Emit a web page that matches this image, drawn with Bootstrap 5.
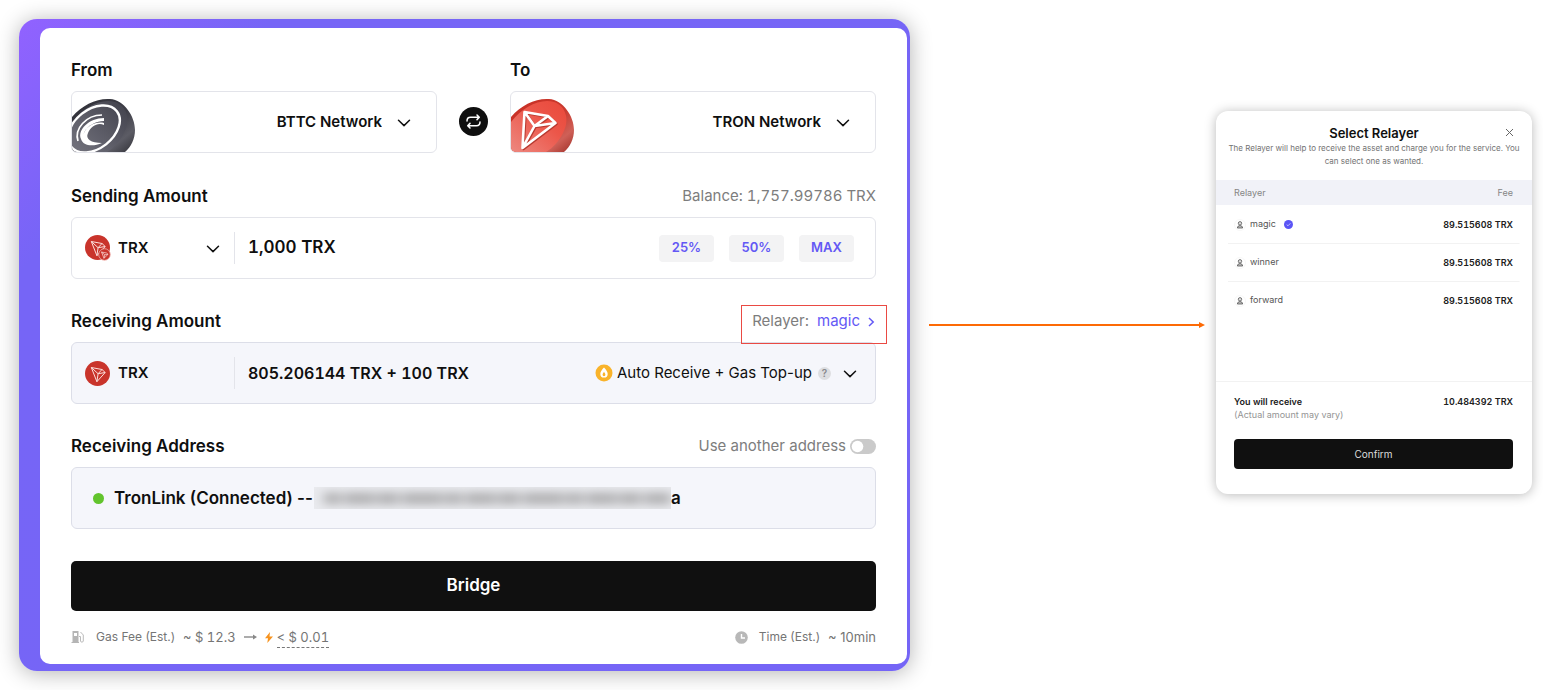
<!DOCTYPE html>
<html lang="en">
<head>
<meta charset="utf-8">
<meta name="viewport" content="width=device-width, initial-scale=1">
<title>Bridge</title>
<link href="https://cdn.jsdelivr.net/npm/bootstrap@5.3.0/dist/css/bootstrap.min.css" rel="stylesheet">
<style>
  :root { --ink: #0f0f0f; --muted: #7d7d7d; --violet: #6358f5; --line: #e3e4ea; --chev: url("data:image/svg+xml,%3Csvg xmlns='http://www.w3.org/2000/svg' width='14' height='10' fill='none' stroke='%23111' stroke-width='1.5' stroke-linecap='round' stroke-linejoin='round'%3E%3Cpath d='M1.500 3.200l5.500 5.400 5.500-5.400'/%3E%3C/svg%3E"); }
  body { font-family: Inter, "Liberation Sans", sans-serif; color: var(--ink); background: #fff; }
  button, input, select { font-family: inherit; color: inherit; }
  .stage { display: grid; grid-template-columns: 891fr 306fr 316fr; align-items: start; padding: 19px 11px 19px 19px; }
  .frame { border-radius: 18px; padding: 9px 3px 7px 21px; background: linear-gradient(135deg, #9162ff 0, #7665f6 180px, #7565f6 100%); box-shadow: 0 2px 22px rgba(0,0,0,.3); }
  .panel { background: #fff; border-radius: 10px; padding: 30px 31px 17px; }
  .networks { display: grid; grid-template-columns: 1fr 73px 1fr; align-items: end; }
  .label-row { height: 24px; margin-bottom: 9px; font-size: 15px; color: var(--muted); }
  .title { font-size: 17px; line-height: 24px; font-weight: 600; color: var(--ink); margin: 0; }
  .field { height: 62px; border: 1px solid var(--line); border-radius: 6px; position: relative; }
  .field + .label-row { margin-top: 30px; }
  .networks + .label-row { margin-top: 31px; }
  .tinted { background: #f5f6fb; border-color: #dcdee8; }
  .tabular { font-variant-numeric: tabular-nums; }
  .pick { appearance: none; border: 0; background: transparent var(--chev) no-repeat right center; outline-offset: 2px; font-weight: 600; font-size: 15px; padding: 0; }
  .pick.network { width: 100%; height: 60px; text-align-last: right; padding-right: 54px; background-position: right 25px center; }
  .coin { position: absolute; left: 0; bottom: 0; pointer-events: none; border-radius: 0 0 0 5px; }
  .swap { width: 29px; height: 29px; background: #0f0f0f; margin: 0 auto 17px; }
  .asset { width: 163px; height: 32px; padding-left: 13px; border-right: 1px solid var(--line); flex: none; }
  .asset .pick { flex: 1; margin: 0 14px 0 7px; height: 30px; }
  .asset strong { font-size: 15px; font-weight: 600; margin-left: 8px; }
  .amount { border: 0; background: transparent; font-weight: 600; font-size: 16px; min-width: 0; padding: 0 0 0 13px; flex: 1; }
  .amount.entry { font-size: 17px; }
  .share-set { gap: 15px; margin-right: 21px; }
  .share { width: 55px; height: 27px; border: 0; border-radius: 4px; background: #f3f3f4; color: var(--violet); font-size: 13px; font-weight: 600; padding: 0; }
  .relayer { position: relative; }
  .relayer::after { content: ""; position: absolute; inset: -5px -11px -12px -11px; border: 1px solid #ea4a43; z-index: 2; pointer-events: none; }
  .relayer a { color: var(--violet); text-decoration: none; }
  .pick.mode { font-weight: 400; padding-right: 45px; margin-right: 18px; height: 30px; }
  .help { position: absolute; right: 44px; width: 13px; height: 13px; border: 0; border-radius: 50%; background: #dddee1; color: #88898d; font-size: 10px; line-height: 13px; font-weight: 600; padding: 0; }
  .form-check-input.toggle { width: 26px; height: 15px; margin: 0 0 0 4px; border: 0; background-color: #cacaca; background-image: url("data:image/svg+xml,%3Csvg xmlns='http://www.w3.org/2000/svg' viewBox='-4 -4 8 8'%3E%3Ccircle r='3.1' fill='%23fff'/%3E%3C/svg%3E"); background-position: left center; background-repeat: no-repeat; border-radius: 15px; }
  .online { width: 11px; height: 11px; margin: 0 10px 0 5px; background: #62c42d; flex: none; }
  .hidden-part { flex: 0 1 357px; height: 22px; min-width: 0; margin: 0 0 0 1px; }
  .dark { background: #101010; color: #fff; border: 0; }
  .dark:hover { background: #2a2a2a; color: #fff; }
  .bridge { height: 50px; margin-top: 32px; border-radius: 5px; font-size: 17px; font-weight: 600; }
  .notes { height: 20px; margin-top: 16px; font-size: 12px; color: #757575; }
  .notes .name { margin: 0 8px 0 11px; }
  .notes .value { font-size: 13px; line-height: 20px; }
  .gas { border-bottom: 1px dashed #777; }
  .arrow { height: 6px; margin: 303px 11px 0 19px; display: flex; align-items: center; }
  .arrow i { flex: 1; height: 2px; background: #fd6a05; }
  .relay-card { margin-top: 92px; border-radius: 12px; background: #fff; box-shadow: 0 1px 12px rgba(0,0,0,.28); font-size: 9px; line-height: 13px; color: #555; padding-bottom: 25px; }
  .relay-head { position: relative; padding: 14px 12px 12px; text-align: center; font-size: 8px; color: #737373; }
  .relay-head h2 { font-size: 13px; line-height: 16px; font-weight: 600; margin: 0 0 1px; color: var(--ink); }
  .relay-head button { position: absolute; right: 18px; top: 17px; width: 9px; height: 9px; border: 0; background: none; padding: 0; display: flex; }
  .relay-table { width: 100%; }
  .relay-table th { font-weight: 400; height: 25px; background: #f1f2f8; color: #858585; }
  .relay-table td { height: 38px; }
  .relay-table th, .relay-table td { padding: 0 19px 0 18px; }
  .relay-table tr + tr { background: linear-gradient(#f2f2f2, #f2f2f2) no-repeat center top / calc(100% - 24px) 1px; }
  .relay-table .fee { text-align: right; }
  .relay-table td.fee, .receive strong { font-weight: 600; color: #202020; }
  .receive { margin-top: 62px; border-top: 1px solid #f2f2f2; padding: 13px 19px 18px 18px; }
  .receive span { color: #949494; }
  .confirm { display: block; width: calc(100% - 37px); height: 30px; margin-left: 18px; border-radius: 4px; font-size: 10px; color: #ddd; }
  @media (max-width: 991px) { .stage { grid-template-columns: 1fr; } .arrow { margin: 24px 11px 0 19px; } .relay-card { margin-top: 24px; } }
</style>
</head>
<body>
<svg width="0" height="0" class="position-absolute" aria-hidden="true">
  <defs>
    <symbol id="tron" viewBox="0 0 25 25">
      <circle cx="12.500" cy="12.500" r="12.500" fill="#c9342b"/>
      <path d="M6.300 6.500l10.700 2 3.200 3-8.300 9.200zM6.300 6.500l6.800 6.200-1.200 8M13.100 12.700l3.900-4.200M13.100 12.700l7.100-1.200" fill="none" stroke="#fbdedb" stroke-width="1" stroke-linejoin="round"/>
    </symbol>
    <symbol id="person" viewBox="0 0 12 12">
      <circle cx="6" cy="6" r="5.500" fill="#fff" stroke="#f1f1f1" stroke-width=".6"/>
      <circle cx="6" cy="4.300" r="1.700" fill="#ddd" stroke="#555" stroke-width=".8"/>
      <path d="M3.400 9c0-3.200 5.200-3.200 5.200 0z" fill="#bbb" stroke="#555" stroke-width=".8"/>
    </symbol>
  </defs>
</svg>
<main class="stage">
  <section class="frame">
    <form class="panel">
      <div class="networks">
        <div>
          <div class="label-row"><label class="title" for="from">From</label></div>
          <div class="field">
            <svg class="coin" width="64" height="54" viewBox="0 0 64 54" aria-hidden="true">
              <defs><linearGradient id="rim" x1="0" y1="0" x2="1" y2="1"><stop offset="0" stop-color="#2e2e36"/><stop offset=".55" stop-color="#3f3f48"/><stop offset=".78" stop-color="#5c5c65"/><stop offset="1" stop-color="#303036"/></linearGradient>
              <linearGradient id="face" x1="0" y1="1" x2="1" y2="0"><stop offset="0" stop-color="#73737e"/><stop offset="1" stop-color="#41414b"/></linearGradient></defs>
              <path d="M0 19C10 7 25 0 38 1c14 1 25 17 25 31 0 9-4 17-10 22H0z" fill="url(#rim)"/>
              <path d="M0 24C12 9 29 0 43 4c12 4 16 18 9 31-4 8-10 15-17 19H0z" fill="url(#face)"/>
              <ellipse cx="22" cy="31" rx="29" ry="19.500" transform="rotate(-38 22 31)" fill="none" stroke="#fff" stroke-width="2.400"/>
              <path d="M32 20C17 20 5 32 9 41c2 7 12 8 21 4-11 0-17-4-14-10 3-7 10-11 16-8v-2c-8-2-17 3-20 10-1 3-1 5 1 7-5-6 3-18 19-19z" fill="#fff"/>
              <path d="M30 17C14 17 2 31 6 43" fill="none" stroke="#fff" stroke-width="1.700"/>
            </svg>
            <select class="pick network" id="from"><option>BTTC Network</option></select>
          </div>
        </div>
        <button type="button" class="swap btn rounded-circle p-0 d-flex align-items-center justify-content-center" aria-label="Swap networks">
          <svg width="17" height="17" viewBox="0 0 17 17" fill="none" stroke="#fff" stroke-width="1.500" stroke-linecap="round" stroke-linejoin="round"><path d="M2 8C2 5.500 3.500 4.300 5.500 4.300H14M12 2l2.300 2.300L12 6.600M15 9c0 2.500-1.500 3.700-3.500 3.700H3M5 10.400l-2.300 2.300L5 15"/></svg>
        </button>
        <div>
          <div class="label-row"><label class="title" for="to">To</label></div>
          <div class="field">
            <svg class="coin" width="64" height="54" viewBox="0 0 64 54" aria-hidden="true">
              <defs><linearGradient id="redrim" x1="0" y1="0" x2="1" y2="1"><stop offset="0" stop-color="#c92d22"/><stop offset=".55" stop-color="#c93c31"/><stop offset=".78" stop-color="#cf6057"/><stop offset="1" stop-color="#9d2e27"/></linearGradient>
              <linearGradient id="redface" x1="0" y1="1" x2="1" y2="0"><stop offset="0" stop-color="#ed8880"/><stop offset=".6" stop-color="#ec5649"/><stop offset="1" stop-color="#e9483a"/></linearGradient></defs>
              <path d="M0 19C10 7 25 0 38 1c14 1 25 17 25 31 0 9-4 17-10 22H0z" fill="url(#redrim)"/>
              <path d="M0 24C12 9 29 0 43 4c12 4 16 18 9 31-4 8-10 15-17 19H0z" fill="url(#redface)"/>
              <path d="M13.500 14L37 18l7.500 7L11.500 50zM13.500 14l10 14-12 22M23.500 28L37 18M23.500 28l21-3" fill="none" stroke="#b83a30" stroke-width="2.600" stroke-linejoin="round" transform="translate(1 1)"/>
              <path d="M13.500 14L37 18l7.500 7L11.500 50zM13.500 14l10 14-12 22M23.500 28L37 18M23.500 28l21-3" fill="none" stroke="#fff" stroke-width="2.600" stroke-linejoin="round"/>
            </svg>
            <select class="pick network" id="to"><option>TRON Network</option></select>
          </div>
        </div>
      </div>

      <div class="label-row d-flex align-items-center justify-content-between">
        <label class="title" for="send">Sending Amount</label><span class="tabular">Balance: 1,757.99786 TRX</span>
      </div>
      <div class="field d-flex align-items-center">
        <div class="asset d-flex align-items-center">
          <svg width="26" height="26" viewBox="0 0 26 26" aria-hidden="true"><use href="#tron" width="25" height="25"/><circle cx="19.500" cy="19.500" r="5.800" fill="#c9342b" stroke="#f0b5b0" stroke-width=".8"/><path d="M16.500 17l5 1 1.500 1.300-4 4zM16.500 17l3.300 2.800-.8 3.500M19.800 19.800l3.200-.5" fill="none" stroke="#fbdedb" stroke-width=".7"/></svg>
          <select class="pick" aria-label="Token"><option>TRX</option></select>
        </div>
        <input class="amount entry tabular" id="send" value="1,000 TRX">
        <div class="d-flex share-set">
          <button type="button" class="share">25%</button>
          <button type="button" class="share">50%</button>
          <button type="button" class="share">MAX</button>
        </div>
      </div>

      <div class="label-row d-flex align-items-center justify-content-between">
        <label class="title" for="receive">Receiving Amount</label>
        <div class="relayer d-flex align-items-center"><span class="me-2">Relayer:</span><a href="#relayers">magic<svg class="ms-2" width="8" height="10" viewBox="0 0 8 10" fill="none" stroke="currentColor" stroke-width="1.500"><path d="M1 1l4.200 4L1 9"/></svg></a></div>
      </div>
      <div class="field tinted d-flex align-items-center">
        <div class="asset d-flex align-items-center"><svg width="25" height="25" aria-hidden="true"><use href="#tron"/></svg><strong>TRX</strong></div>
        <input class="amount tabular" id="receive" value="805.206144 TRX + 100 TRX" readonly>
        <svg class="me-1" width="18" height="18" viewBox="0 0 18 18" aria-hidden="true"><circle cx="9" cy="9" r="8.500" fill="#f9b32a"/><path d="M9 3.400c2 2.200 3.700 4 3.700 6.500a3.700 3.700 0 0 1-7.400 0C5.300 7.400 7 5.600 9 3.400zM9 8c-1 1.300-1.400 1.900-1.400 2.800a1.400 1.400 0 0 0 2.800 0C10.400 9.900 10 9.300 9 8z" fill="#fff" fill-rule="evenodd"/></svg>
        <select class="pick mode" aria-label="Receive mode"><option>Auto Receive + Gas Top-up</option></select>
        <button type="button" class="help" aria-label="Help">?</button>
      </div>

      <div class="label-row d-flex align-items-center justify-content-between">
        <span class="title">Receiving Address</span>
        <div class="d-flex align-items-center"><label for="other">Use another address</label><input class="form-check-input toggle" type="checkbox" role="switch" id="other"></div>
      </div>
      <div class="field tinted d-flex align-items-center ps-3">
        <i class="online rounded-circle"></i>
        <span class="title text-nowrap">TronLink (Connected) --</span>
        <svg class="hidden-part" viewBox="0 0 357 22" preserveAspectRatio="none" aria-hidden="true">
          <defs>
            <filter id="soft" filterUnits="userSpaceOnUse" x="-20" y="-20" width="400" height="62"><feGaussianBlur stdDeviation="6 4"/></filter>
          </defs>
          <rect width="357" height="22" fill="#e9eaee"/>
          <path d="M10 11.500H357" stroke="#b6b6b8" stroke-width="13" stroke-dasharray="17 3 31 2 22 3 41 2" filter="url(#soft)"/>
        </svg>
        <span class="title">a</span>
      </div>

      <button type="button" class="btn dark bridge w-100 p-0">Bridge</button>
      <div class="notes d-flex align-items-center justify-content-between">
        <div class="d-flex align-items-center">
          <svg width="14" height="14" viewBox="0 0 14 14" aria-hidden="true"><path d="M1.500 1h6v11H8v1H.5v-1h1z" fill="#b5b5b5"/><path d="M3 3h3v3H3z" fill="#fff"/><path d="M8 6.500h1.500V11c0 1.500 2.800 1.500 2.800 0V5L9.500 2" fill="none" stroke="#bbb"/></svg>
          <span class="name">Gas Fee (Est.)</span><span class="value tabular">~ $ 12.3</span>
          <svg class="mx-2" width="13" height="8" viewBox="0 0 13 8" aria-hidden="true"><path d="M0 4h10" stroke="#888" stroke-width="1.400"/><path d="M9 1.500L13 4 9 6.500z" fill="#888"/></svg>
          <svg class="me-1" width="8" height="11" viewBox="0 0 8 11" aria-hidden="true"><path d="M5 0L0 6.300h3L2.300 11 8 4.500H4.500z" fill="#f7931e"/></svg>
          <span class="value tabular gas">&lt; $ 0.01</span>
        </div>
        <div class="d-flex align-items-center">
          <svg width="13" height="13" viewBox="0 0 13 13" aria-hidden="true"><circle cx="6.500" cy="6.500" r="6.300" fill="#b8b8b8"/><path d="M6.500 3v4H10" fill="none" stroke="#fff" stroke-width="1.400"/></svg>
          <span class="name">Time (Est.)</span><span class="value">~ 10min</span>
        </div>
      </div>
    </form>
  </section>

  <div class="arrow" aria-hidden="true"><i></i><svg width="6" height="6" viewBox="0 0 6 6"><path d="M0 0l6 3-6 3z" fill="#fd6a05"/></svg></div>

  <section class="relay-card" id="relayers">
    <header class="relay-head">
      <h2>Select Relayer</h2>
      The Relayer will help to receive the asset and charge you for the service. You can select one as wanted.
      <button type="button" aria-label="Close"><svg width="9" height="9" viewBox="0 0 9 9" stroke="#666"><path d="M1 1l7 7M8 1L1 8"/></svg></button>
    </header>
    <table class="relay-table tabular">
      <thead><tr><th>Relayer</th><th class="fee">Fee</th></tr></thead>
      <tbody>
        <tr><td><svg width="12" height="12"><use href="#person"/></svg><span class="ms-1">magic</span><svg class="ms-2" width="9" height="9" viewBox="0 0 9 9"><circle cx="4.500" cy="4.500" r="4.500" fill="#5b55f6"/><path d="M2.700 4.600L4 5.800l2.400-2.500" fill="none" stroke="#d8d6ff" stroke-width=".8"/></svg></td><td class="fee">89.515608 TRX</td></tr>
        <tr><td><svg width="12" height="12"><use href="#person"/></svg><span class="ms-1">winner</span></td><td class="fee">89.515608 TRX</td></tr>
        <tr><td><svg width="12" height="12"><use href="#person"/></svg><span class="ms-1">forward</span></td><td class="fee">89.515608 TRX</td></tr>
      </tbody>
    </table>
    <div class="receive tabular">
      <div class="d-flex justify-content-between"><strong>You will receive</strong><strong>10.484392 TRX</strong></div>
      <span>(Actual amount may vary)</span>
    </div>
    <button type="button" class="btn dark confirm p-0">Confirm</button>
  </section>
</main>
<script src="https://cdn.jsdelivr.net/npm/bootstrap@5.3.0/dist/js/bootstrap.bundle.min.js"></script>
</body>
</html>
